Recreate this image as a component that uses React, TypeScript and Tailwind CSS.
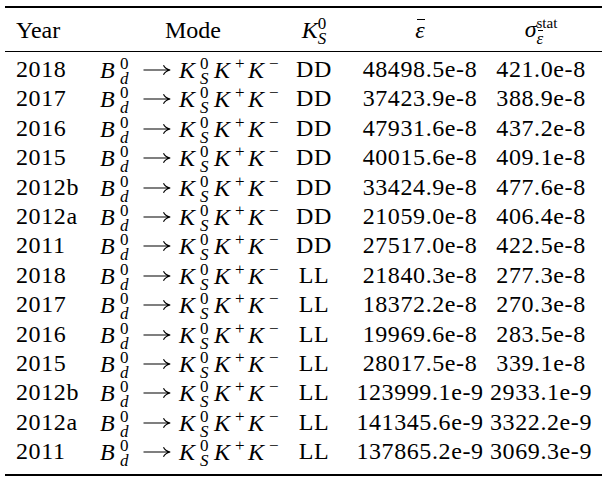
import type { ReactNode } from 'react';

const ROWS = [
  ['2018', 'DD', '48498.5e-8', '421.0e-8'],
  ['2017', 'DD', '37423.9e-8', '388.9e-8'],
  ['2016', 'DD', '47931.6e-8', '437.2e-8'],
  ['2015', 'DD', '40015.6e-8', '409.1e-8'],
  ['2012b', 'DD', '33424.9e-8', '477.6e-8'],
  ['2012a', 'DD', '21059.0e-8', '406.4e-8'],
  ['2011', 'DD', '27517.0e-8', '422.5e-8'],
  ['2018', 'LL', '21840.3e-8', '277.3e-8'],
  ['2017', 'LL', '18372.2e-8', '270.3e-8'],
  ['2016', 'LL', '19969.6e-8', '283.5e-8'],
  ['2015', 'LL', '28017.5e-8', '339.1e-8'],
  ['2012b', 'LL', '123999.1e-9', '2933.1e-9'],
  ['2012a', 'LL', '141345.6e-9', '3322.2e-9'],
  ['2011', 'LL', '137865.2e-9', '3069.3e-9'],
];

const GRID = 'grid grid-cols-[85px_206px_36px_176px_66px]';

function Scripts({ sup, sub, w }: { sup: ReactNode; sub: ReactNode; w?: string }) {
  return (
    <span className={`inline-flex flex-col align-[9px] text-[17px] leading-[15px] ${w ?? ''}`}>
      <span>{sup}</span>
      <span>{sub}</span>
    </span>
  );
}

function Sup({ children, w }: { children: ReactNode; w: string }) {
  return <span className={`inline-block align-[9px] text-[17px] leading-none ${w}`}>{children}</span>;
}

function EpsBar({ small }: { small?: boolean }) {
  return (
    <span className="relative italic">
      ε
      <span className={small ? 'absolute left-[1px] right-0 top-[1px] h-px bg-black' : 'absolute left-[2px] right-0 top-[3px] h-px bg-black'} />
    </span>
  );
}

function Arrow() {
  return (
    <svg width="28" height="12" viewBox="0 0 28 12" className="inline-block ml-[9px] mr-[8px] align-[2px]">
      <path d="M0.5 6H27M20.5 1.2Q22 4.8 27.2 6Q22 7.2 20.5 10.8" fill="none" stroke="black" strokeWidth="1.1" />
    </svg>
  );
}

function Mode() {
  return (
    <span className="tracking-normal">
      <i className="inline-block w-[20px]">B</i>
      <Scripts sup="0" sub={<i>d</i>} w="w-[14px]" />
      <Arrow />
      <i className="inline-block w-[21px]">K</i>
      <Scripts sup="0" sub={<i>S</i>} w="w-[14px]" />
      <i className="inline-block w-[21px]">K</i>
      <Sup w="w-[13px]">+</Sup>
      <i className="inline-block w-[21px]">K</i>
      <Sup w="w-[17px]">−</Sup>
    </span>
  );
}

function Cell({ children, left }: { children: ReactNode; left?: boolean }) {
  return <div className={left ? 'flex whitespace-nowrap pl-[11px]' : 'flex justify-center whitespace-nowrap'}>{children}</div>;
}

export default function App() {
  return (
    <div className="w-[607px] h-[484px] bg-white px-[5px] pt-[6px] text-black text-[24px] font-['Liberation_Serif']">
      <div className="border-t-2 border-black">
        <div className={`${GRID} h-[44px] items-center leading-[29px] border-b border-black pt-[2px]`}>
          <Cell left>Year</Cell>
          <Cell>Mode</Cell>
          <Cell>
            <span>
              <i>K</i>
              <Scripts sup="0" sub={<i>S</i>} />
            </span>
          </Cell>
          <Cell>
            <EpsBar />
          </Cell>
          <Cell>
            <span>
              <i>σ</i>
              <Scripts sup={<span className="text-[15px]">stat</span>} sub={<EpsBar small />} />
            </span>
          </Cell>
        </div>
        <div className="pt-[3px] pb-[8px] border-b-2 border-black">
          {ROWS.map((r, i) => (
            <div key={i} className={`${GRID} h-[29.4px] leading-[29px] tracking-[0.6px]`}>
              <Cell left>{r[0]}</Cell>
              <Cell>
                <Mode />
              </Cell>
              <Cell>{r[1]}</Cell>
              <Cell>{r[2]}</Cell>
              <Cell>{r[3]}</Cell>
            </div>
          ))}
        </div>
      </div>
    </div>
  );
}
